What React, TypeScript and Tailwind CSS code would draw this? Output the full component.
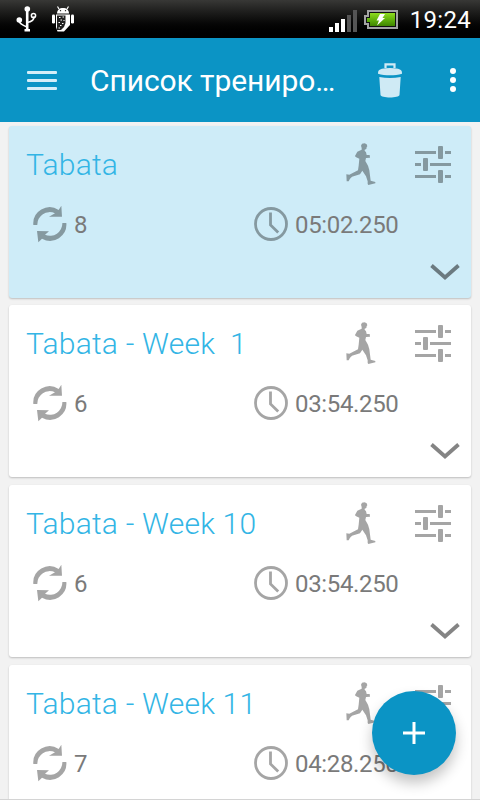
type TWorkout = {
    name: string
    rounds: number
    time: string
    selected?: boolean
    gap: string
}

const workouts: TWorkout[] = [
    { name: "Tabata", rounds: 8, time: "05:02.250", selected: true, gap: "mt-1" },
    { name: "Tabata - Week  1", rounds: 6, time: "03:54.250", gap: "mt-[7px]" },
    { name: "Tabata - Week 10", rounds: 6, time: "03:54.250", gap: "mt-2" },
    { name: "Tabata - Week 11", rounds: 7, time: "04:28.250", gap: "mt-2" },
]

function UsbIcon() {
    return (
        <svg width="22" height="28" viewBox="0 0 22 28" fill="none" stroke="#fff" strokeWidth="1.7">
            <path d="M11.200 4v21" strokeWidth="2.600" />
            <path d="M3 15.500c.5 3.500 4 5 8 6.500M11 17.500c5-.5 7-2.500 7-6" />
            <circle cx="11.300" cy="4" r="2.800" fill="#fff" stroke="none" />
            <circle cx="3.300" cy="15" r="2.800" fill="#fff" stroke="none" />
            <circle cx="17.500" cy="10.500" r="2.100" strokeWidth="1.500" />
            <path d="M8.500 24h5.500v2.500H8.500z" fill="#fff" stroke="none" />
        </svg>
    )
}

function DebugIcon() {
    return (
        <svg width="24" height="28" viewBox="0 0 24 28" fill="#fff">
            <path d="M6 8.500c0-3.500 2.500-5.500 6-5.500s6 2 6 5.500z" />
            <path d="M8 4 6.500 1.500M16 4l1.500-2.500" stroke="#fff" strokeWidth="1.200" />
            <rect x="1" y="9.500" width="3" height="9" rx="1.300" />
            <rect x="20" y="9.500" width="3" height="9" rx="1.300" />
            <path d="M5 9.500h14V20l-6 6.500H6.500L5 22z" />
            <path d="M6 10.500h8.500V18L13 22l-3 3H6z" fill="#222" />
            <path d="M8 12.500h1.500M11.500 12h1.500M9.500 15h1.500M12.500 15.500h1M7.500 17.500H9M11 18.500h1.500M9 20.500h1.500M7.500 23H9" stroke="#fff" strokeWidth="1.200" />
            <path d="M9.500 5v1.300M14.500 5v1.300" stroke="#333" strokeWidth="1.200" />
        </svg>
    )
}

function SignalIcon() {
    return (
        <svg width="28" height="22" viewBox="0 0 28 22" fill="#fff">
            <path d="M0 17h4v5H0zM6 13h4v9H6zM12 9h4v13h-4z" />
            <path d="M18 5h4v17h-4zM24 0h4v22h-4z" fill="#555" />
        </svg>
    )
}

function BatteryIcon() {
    return (
        <svg width="34" height="19" viewBox="0 0 34 19">
            <defs>
                <linearGradient id="charge" x1="0" y1="0" x2="0" y2="1">
                    <stop offset="0" stopColor="#8fdc20" />
                    <stop offset=".5" stopColor="#62b30b" />
                    <stop offset="1" stopColor="#3f8500" />
                </linearGradient>
            </defs>
            <path d="M3 0h31v19H3v-4H0V5h3z" fill="#a3a3a3" />
            <path d="M5 2h27v15H5v-4H2V7h3z" fill="#111" />
            <path d="M6 3h25v13H6v-4H3V8h3z" fill="url(#charge)" />
            <path d="M16 4h5l-2.500 4H21l-8 7.500 2-5h-2.500z" fill="#fff" />
        </svg>
    )
}

function TrashIcon() {
    return (
        <svg width="24" height="35" viewBox="0 0 24 35" fill="#cfeaf5">
            <path d="M7.500 5V1.300h9V5" fill="none" stroke="#cfeaf5" strokeWidth="2.200" />
            <path d="M4 5.700C9 4.600 15 4.600 20 5.700c3 .8 4 2 4 4v1c-7 2-17 2-24 0v-1c0-2 1-3.200 4-4z" />
            <path d="M1.300 14c7 1.300 14.400 1.300 21.400 0l-1.200 18c-.2 3.300-18.800 3.300-19 0z" />
        </svg>
    )
}

function RunnerIcon() {
    return (
        <svg className="opacity-35" width="30" height="43" viewBox="48 50 90 129">
            <path d="M93 58 96 52 104 50.500 110 54 112 60 110 62 109 68 104 70 104 73 108 78 110 86 119 86 120 94 108 95 106 104 114 118 118 132 122 163 136 167 136 171 115 176 113 173 113 165 108 150 97 133 90 144 66 151 60 157 56 165 50 165 49 144 58 145 84 132 86 118 88 97 77 92 75 89 82 76 95 70 95 65Z" />
        </svg>
    )
}

function TuneIcon() {
    return (
        <svg className="opacity-35" width="36" height="37" viewBox="0 0 36 37">
            <path d="M0 5h21v3H0zM30 5h6v3h-6zM0 17h6v3H0zM15 17h21v3H15zM0 29h21v3H0zM30 29h6v3h-6z" />
            <rect x="23" y="0" width="5" height="13" rx="1" />
            <rect x="8" y="12" width="5" height="13" rx="1" />
            <rect x="23" y="24" width="5" height="13" rx="1" />
        </svg>
    )
}

function RoundsIcon() {
    return (
        <svg className="opacity-35" width="34" height="38" viewBox="101 237 102 114">
            <path d="M102 297A49 49 0 0 1 178 252L186 239 188 272 149 272 167 262A37 37 0 0 0 114 297ZM201 291A49 49 0 0 1 128 338L117 349 113 315 149 316 137 326A37 37 0 0 0 189 291Z" />
        </svg>
    )
}

function ClockIcon() {
    return (
        <svg className="opacity-35" width="34" height="34" viewBox="0 0 34 34" fill="none" stroke="#000" strokeWidth="2.800">
            <circle cx="17" cy="17" r="15.500" />
            <path d="M16.500 5.500V18l7.700 7.500" />
        </svg>
    )
}

function WorkoutCard({ workout }: { workout: TWorkout }) {
    return (
        <div className={`${workout.gap} ${workout.selected ? "bg-[#ceecf8]" : "bg-white"} h-[172px] shrink-0 rounded-[3px] shadow-[0_1px_2px_rgba(0,0,0,0.22)]`}>
            <div className="flex h-[76px] items-center pl-[17px] pr-5">
                <span className="flex-1 whitespace-pre pt-0.5 text-[30px] font-light leading-none tracking-[0.22px] text-[#33b5e5]">{workout.name}</span>
                <RunnerIcon />
                <div className="ml-[39px]">
                    <TuneIcon />
                </div>
            </div>
            <div className="flex h-[44px] items-center pl-6 text-2xl text-[#7a7a7a]">
                <div className="flex w-[221px] items-center gap-[7px]">
                    <RoundsIcon />
                    <span className="pt-0.5">{workout.rounds}</span>
                </div>
                <ClockIcon />
                <span className="ml-[7px] pt-0.5 tracking-[-0.35px]">{workout.time}</span>
            </div>
            <div className="flex justify-end pr-[11px] pt-[17px]">
                <svg className="opacity-48" width="30" height="18" viewBox="0 0 30 18" fill="none" stroke="#000" strokeWidth="3.800">
                    <path d="M1.500 2.500 15 14.500 28.500 2.500" />
                </svg>
            </div>
        </div>
    )
}

export default function App() {
    return (
        <div className="relative flex h-[800px] w-[480px] flex-col overflow-hidden bg-[#f2f2f2] font-[Roboto,sans-serif]">
            <div className="flex h-[38px] shrink-0 items-center bg-linear-to-b from-[#383836] to-black pl-4 pr-[9px]">
                <UsbIcon />
                <div className="ml-[13px]">
                    <DebugIcon />
                </div>
                <div className="ml-auto mt-[3px]">
                    <SignalIcon />
                </div>
                <div className="ml-[7px]">
                    <BatteryIcon />
                </div>
                <span className="ml-[12px] pt-0.5 text-2xl tracking-[0.3px] text-white">19:24</span>
            </div>
            <header className="flex h-[84px] shrink-0 items-center bg-[#0b94c5] pl-[27px] pr-6">
                <svg width="30" height="19" viewBox="0 0 30 19" fill="#d5eef8">
                    <rect y="0" width="30" height="3" rx="1" />
                    <rect y="8" width="30" height="3" rx="1" />
                    <rect y="16" width="30" height="3" rx="1" />
                </svg>
                <h1 className="ml-[33px] w-[250px] truncate text-[30px] tracking-[-0.08px] text-white">Список трениро…</h1>
                <div className="ml-auto">
                    <TrashIcon />
                </div>
                <svg className="ml-[48px]" width="6" height="24" viewBox="0 0 6 24" fill="#fff">
                    <circle cx="3" cy="3" r="3" />
                    <circle cx="3" cy="12" r="3" />
                    <circle cx="3" cy="21" r="3" />
                </svg>
            </header>
            <main className="flex flex-1 flex-col overflow-hidden px-[9px]">
                {workouts.map((workout) => (
                    <WorkoutCard key={workout.name} workout={workout} />
                ))}
            </main>
            <div className="absolute bottom-0 h-px w-full bg-[#d4d4d4]" />
            <button className="absolute left-[372px] top-[691px] flex size-[84px] items-center justify-center rounded-full bg-[#0b94c5] shadow-[0_8px_14px_rgba(0,0,0,0.24)]">
                <svg width="22" height="22" viewBox="0 0 22 22" fill="#fff">
                    <path d="M9.500 0h3v9.500H22v3h-9.500V22h-3v-9.500H0v-3h9.500z" />
                </svg>
            </button>
        </div>
    )
}
